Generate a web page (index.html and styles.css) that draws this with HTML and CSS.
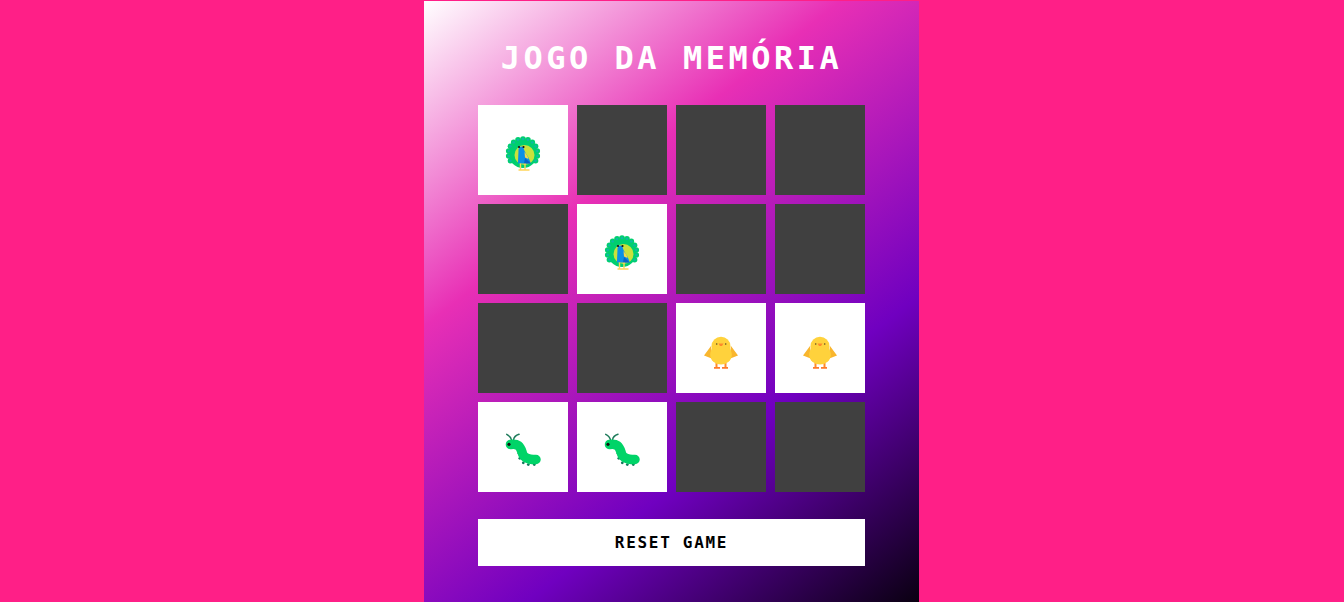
FILE: index.html
```html
<!DOCTYPE html>
<html lang="pt">
<head>
<meta charset="utf-8">
<title>Jogo da Memória</title>
<link rel="stylesheet" href="styles.css">
</head>
<body>
<svg class="sprite" xmlns="http://www.w3.org/2000/svg">
<symbol id="peacock" viewBox="0 0 36 36">
<g transform="translate(0 1.500)">
<circle cx="18" cy="16" r="14.500" fill="#00cf6f"/>
<g fill="#00cf6f"><circle cx="5.440" cy="23.250" r="2.800"/><circle cx="3.720" cy="18.520" r="2.800"/><circle cx="3.720" cy="13.480" r="2.800"/><circle cx="5.440" cy="8.750" r="2.800"/><circle cx="8.680" cy="4.890" r="2.800"/><circle cx="13.040" cy="2.370" r="2.800"/><circle cx="18" cy="1.500" r="2.800"/><circle cx="22.960" cy="2.370" r="2.800"/><circle cx="27.320" cy="4.890" r="2.800"/><circle cx="30.560" cy="8.750" r="2.800"/><circle cx="32.280" cy="13.480" r="2.800"/><circle cx="32.280" cy="18.520" r="2.800"/><circle cx="30.560" cy="23.250" r="2.800"/></g>
<g fill="#12b5a8"><circle cx="5.440" cy="23.250" r="1.200"/><circle cx="3.720" cy="18.520" r="1.200"/><circle cx="3.720" cy="13.480" r="1.200"/><circle cx="5.440" cy="8.750" r="1.200"/><circle cx="8.680" cy="4.890" r="1.200"/><circle cx="13.040" cy="2.370" r="1.200"/><circle cx="18" cy="1.500" r="1.200"/><circle cx="22.960" cy="2.370" r="1.200"/><circle cx="27.320" cy="4.890" r="1.200"/><circle cx="30.560" cy="8.750" r="1.200"/><circle cx="32.280" cy="13.480" r="1.200"/><circle cx="32.280" cy="18.520" r="1.200"/><circle cx="30.560" cy="23.250" r="1.200"/></g>
</g>
<circle cx="19.500" cy="19" r="10" fill="#c8e23c"/>
<path d="M13 27.500c0-5.500.5-10 .5-14 .5-4 5-4 5.500 0 .8 3.500 5.500 8 6.700 14z" fill="#0a8fe6"/>
<path d="M19.500 16c1.500 2 3.500 4 4 7l-3.500-1.500z" fill="#f5d94a"/>
<path d="M20 22l5.800 5.500H19z" fill="#0b63c4"/>
<circle cx="14" cy="11" r="1.100" fill="#111"/>
<circle cx="18.500" cy="11" r="1.100" fill="#111"/>
<path d="M15.500 27.500V33.500M20 27.500V33.500M13.500 34h11" stroke="#ffd55a" stroke-width="1.400" fill="none"/>
</symbol>
<symbol id="chick" viewBox="0 0 36 36">
<path d="M8 12 1 21.500l9 3.500zM28 12l7 9.500-9 3.500z" fill="#f9b62e"/>
<path d="M13.500 29v4M22.500 29v4" stroke="#ff8a2a" stroke-width="2"/>
<path d="M11 33.800h6M19 33.800h6" stroke="#ff7a2a" stroke-width="1.800"/>
<circle cx="18" cy="12.200" r="9.500" fill="#ffd23c"/>
<ellipse cx="18" cy="20.700" rx="10.800" ry="9.800" fill="#ffd23c"/>
<path d="M15.500 9.500h5l-1.500 2.500h-2z" fill="#ff8a2a"/>
<circle cx="13.700" cy="10" r=".8" fill="#5a4a20"/>
<circle cx="22.700" cy="10" r=".8" fill="#5a4a20"/>
</symbol>
<symbol id="bug" viewBox="0 0 36 36">
<path d="M6.500 7C6 4 4 2.500 1.700 1.300M8.500 7C9 4 11.500 2 14 1.300" stroke="#1e7a5a" stroke-width="1.500" fill="none" stroke-linecap="round"/>
<g fill="#137a5c"><circle cx="14" cy="20.300" r="1.400"/><circle cx="14.800" cy="25.300" r="1.400"/><circle cx="18.300" cy="29.800" r="1.400"/><circle cx="23.300" cy="31.600" r="1.400"/><circle cx="29.300" cy="31.600" r="1.400"/></g>
<path d="M5.500 11.500C13 10.500 15 13 17 19c1.200 5 4 7.500 14 7.500" stroke="#00d468" stroke-width="9.500" fill="none" stroke-linecap="round"/>
<circle cx="4" cy="11.300" r="1.600" fill="#111"/>
</symbol>
</svg>
<main class="container">
<h1 class="title">JOGO DA MEMÓRIA</h1>
<div class="board">
<div class="card open"><svg class="icon"><use href="#peacock"/></svg></div><div class="card"></div><div class="card"></div><div class="card"></div>
<div class="card"></div><div class="card open"><svg class="icon"><use href="#peacock"/></svg></div><div class="card"></div><div class="card"></div>
<div class="card"></div><div class="card"></div><div class="card open"><svg class="icon"><use href="#chick"/></svg></div><div class="card open"><svg class="icon"><use href="#chick"/></svg></div>
<div class="card open"><svg class="icon"><use href="#bug"/></svg></div><div class="card open"><svg class="icon"><use href="#bug"/></svg></div><div class="card"></div><div class="card"></div>
</div>
<button class="reset">RESET GAME</button>
</main>
</body>
</html>
```
FILE: styles.css
```css
* { box-sizing: border-box; }
.sprite { display: none; }
body {
  margin: 0;
  min-height: 100vh;
  display: flex;
  justify-content: center;
  align-items: center;
  padding-right: 1px;
  background: #ff1f87;
  font-family: "DejaVu Sans Mono", monospace;
}
.container {
  width: 495px;
  height: 601px;
  margin-top: 1px;
  padding: 36px 54px;
  display: flex;
  flex-direction: column;
  background: linear-gradient(142deg, #fff 0%, #e82fb5 33%, #7000c0 69%, #000 103%);
}
.title {
  margin: 0 0 32px;
  font-size: 32px;
  line-height: 36px;
  letter-spacing: 3.5px;
  color: #fff;
  text-align: center;
  padding-top: 3px;
  height: 36px;
}
.board {
  display: grid;
  grid-template-columns: repeat(4, 90px);
  grid-auto-rows: 90px;
  gap: 9px;
}
.card {
  background: #404040;
  display: flex;
  align-items: center;
  justify-content: center;
  padding-top: 8px;
}
.open { background: #fff; }
.icon { width: 36px; height: 36px; }
.reset {
  margin-top: 27px;
  height: 47px;
  border: 0;
  background: #fff;
  color: #000;
  font: bold 16px "DejaVu Sans Mono", monospace;
  letter-spacing: 1.7px;
}
```
